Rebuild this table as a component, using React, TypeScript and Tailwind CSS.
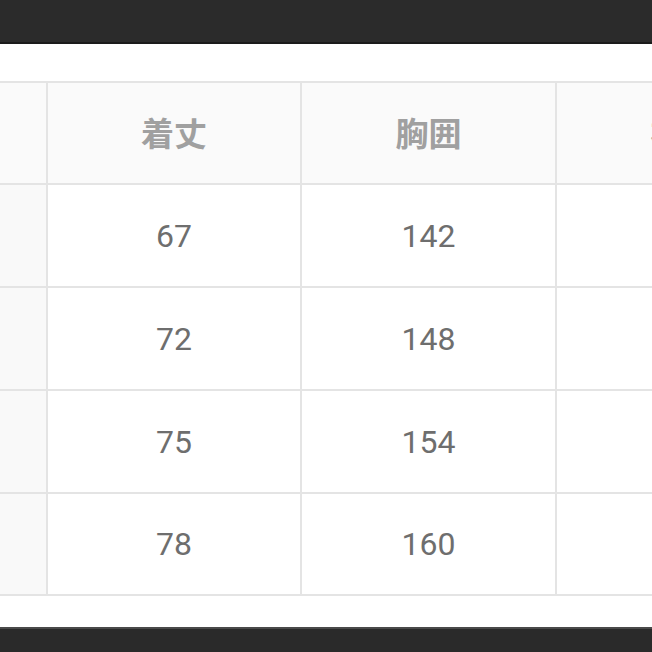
const headers = ['', '着丈', '胸囲', '袖丈'];

const rows = [
  ['', '67', '142', ''],
  ['', '72', '148', ''],
  ['', '75', '154', ''],
  ['', '78', '160', ''],
];

export default function App() {
  return (
    <div className="w-[652px] h-[652px] bg-white flex flex-col overflow-hidden">
      <div className="h-[44px] shrink-0 bg-[#2b2b2b] border-b-2 border-[#1b1b1b]" />
      <div className="h-[37px] shrink-0" />
      <div className="overflow-hidden">
        <div className="grid grid-cols-[46px_252px_253px_253px] grid-rows-[100px_101px_101px_101px_100px] gap-[2px] bg-[#e4e4e4] py-[2px] w-max">
          {headers.map((h, i) => (
            <div
              key={`h${i}`}
              className="bg-[#fafafa] flex items-center justify-center text-[33px] font-bold text-[#a0a0a0] font-['Noto_Sans_CJK_JP',sans-serif]"
            >
              {h}
            </div>
          ))}
          {rows.map((row, r) =>
            row.map((cell, c) => (
              <div
                key={`${r}-${c}`}
                className={`${c === 0 ? 'bg-[#f9f9f9]' : 'bg-white'} flex items-center justify-center text-[32px] text-[#6e6e6e] font-['Roboto',sans-serif]`}
              >
                {cell}
              </div>
            ))
          )}
        </div>
      </div>
      <div className="h-[31px] shrink-0" />
      <div className="flex-1 bg-[#2a2a2a] border-t-2 border-[#4a4a4a]" />
    </div>
  );
}
